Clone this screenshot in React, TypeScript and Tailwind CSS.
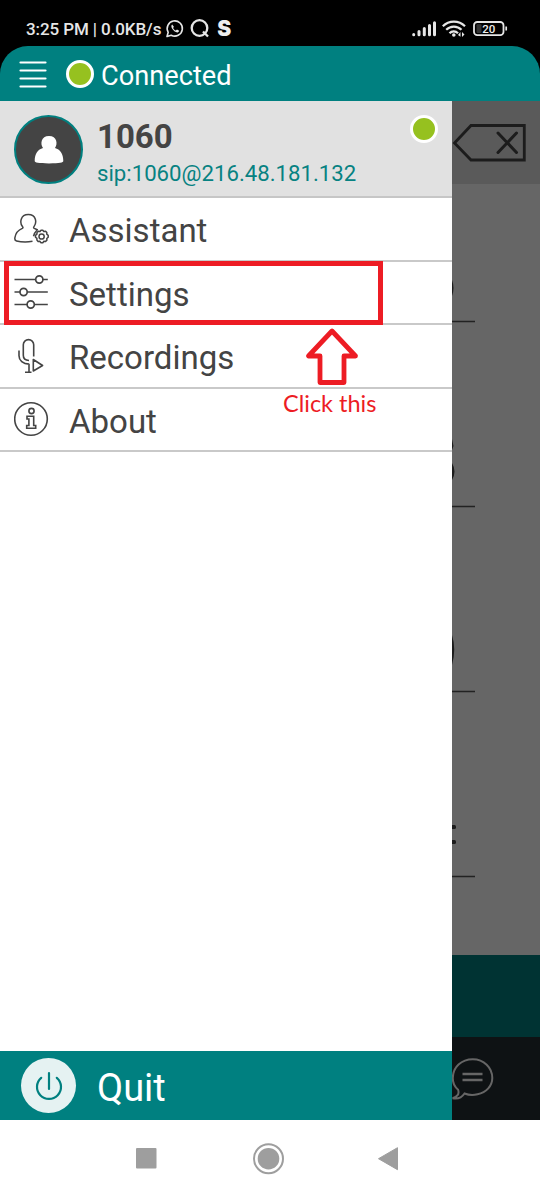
import type { ReactNode } from "react";

const ICON_STROKE = "#444";

function StatusBar() {
  return (
    <div className="flex h-[46px] items-start bg-black pt-[17px] text-[#e6e6e6]">
      <span className="ml-[26px] w-[138px] whitespace-nowrap text-[17px] leading-6 font-medium tracking-[-0.1px]">
        3:25 PM | 0.0KB/s
      </span>
      <svg className="ml-px" width="70" height="24" viewBox="165 17 70 24" fill="none" stroke="#e6e6e6">
        <path
          d="M167 36.500l1.200-4.200a7.600 7.600 0 1 1 3 2.900z"
          strokeWidth="1.600"
          strokeLinejoin="round"
        />
        <path
          d="M172.200 24.600c-1.300 1-1 2.700.2 4.500 1.500 2.200 3.600 3.600 5.200 3.300.9-.2 1.500-.9 1.500-1.600l-2.100-1.300-1.200 1c-1.200-.5-2.200-1.500-2.700-2.600l.8-1.100z"
          fill="#e6e6e6"
          stroke="none"
        />
        <circle cx="199.500" cy="28" r="7.800" strokeWidth="2.300" />
        <path d="M203 31.500l5 5" strokeWidth="2.300" />
        <text x="217.200" y="35.900" fontSize="21" fontWeight="900" fontFamily="Inter, sans-serif" fill="#eee" stroke="none">
          S
        </text>
      </svg>
      <svg className="ml-auto" width="130" height="24" viewBox="410 17 130 24" fill="none">
        <g stroke="#e6e6e6" strokeWidth="3" strokeLinecap="round">
          <path d="M413.700 34.500v.3M419 31.500v3.300M424.300 28.500v6.300M429.500 25.500v9.300M434.500 22.800v12" />
        </g>
        <g stroke="#e6e6e6" strokeWidth="2.200">
          <path d="M442.800 26.200c6.200-6.200 16-6.200 22.200 0M446.200 29.800c4.300-4.300 11-4.300 15.300 0M449.500 33.200c2.300-2.500 6.100-2.500 8.500 0" />
        </g>
        <circle cx="453.800" cy="35" r="1.800" fill="#e6e6e6" />
        <path d="M458 35l2.500-3v4.700zM464.500 34.500l-2.500 2.500v-5z" fill="#e6e6e6" />
        <rect x="474" y="22" width="29.500" height="13.200" rx="3.300" stroke="#e6e6e6" strokeWidth="1.800" />
        <rect x="476.500" y="24.300" width="5" height="8.700" rx="1" fill="#333" />
        <path d="M506.200 26.500v4" stroke="#e6e6e6" strokeWidth="1.700" />
        <text x="482.200" y="32.900" fontSize="11.500" fontWeight="500" fontFamily="Roboto, sans-serif" fill="#eee">
          20
        </text>
      </svg>
    </div>
  );
}

function StatusDot() {
  return <span className="size-[28px] shrink-0 rounded-full border-3 border-white bg-[#96c11f]" />;
}

function TopBar() {
  return (
    <div className="bg-black">
      <header className="flex h-[55px] items-center rounded-t-[28px] bg-[#008080] pl-[19px] text-white">
        <svg width="28" height="28" viewBox="0 0 28 28" stroke="white" strokeWidth="2.200" strokeLinecap="round">
          <path d="M1.500 2.500h25M1.500 10.500h25M1.500 18.500h25M1.500 26.500h25" />
        </svg>
        <span className="ml-[19px] flex">
          <StatusDot />
        </span>
        <h1 className="ml-[7px] pt-[5px] text-[27.200px] leading-8">Connected</h1>
      </header>
    </div>
  );
}

function AssistantIcon() {
  return (
    <svg width="36" height="36" viewBox="0 -1.500 36 36" fill="none" stroke={ICON_STROKE} strokeWidth="1.500">
      <path
        d="M18.500 28.800c-5 .8-11.500.7-16-.4-1.800-.4-1.900-1.700-1.600-3.300.9-5.300 3.500-7.600 7.400-9.200.8-.4.900-1 .3-1.700C5.500 10.500 6.200 2 14.300 2c8 0 8.700 8.200 5.700 12.100-.6.800-.5 1.400.3 1.800l3 1.400c-1.700 1.700-3.200 4-3.800 6.500"
        strokeLinejoin="round"
      />
      <path
        d="M26 19l1-1.300h1.800l1 1.300 1.800-.3 1.200 1.300v1.700l1.400 1.100v1.900L32.800 26l.1 1.700-1.300 1.200-1.700-.1-1.100 1.400H27l-1.200-1.400-1.700.1-1.200-1.300v-1.700l-1.400-1.200v-1.900l1.400-1.100.1-1.700 1.200-1.200z"
        strokeLinejoin="round"
      />
      <circle cx="27.600" cy="24" r="2.600" />
    </svg>
  );
}

function SettingsIcon() {
  return (
    <svg width="36" height="36" viewBox="0 0 36 36" fill="white" stroke={ICON_STROKE} strokeWidth="1.700">
      <path d="M.5 5.500h33.300M.5 18h33.300M.5 30.500h33.300" />
      <circle cx="25.300" cy="5.500" r="3.600" />
      <circle cx="9.600" cy="18" r="3.600" />
      <circle cx="16.700" cy="30.500" r="3.600" />
    </svg>
  );
}

function RecordingsIcon() {
  return (
    <svg width="36" height="36" viewBox="0 0 36 36" fill="none" stroke={ICON_STROKE} strokeWidth="1.600">
      <path d="M19.700 18.500V6.800a5.200 5.200 0 0 0-10.400 0v10.500c0 3.200 2.200 5.100 5.700 5.200" />
      <path d="M5 12.500v5.300c0 4.600 3.800 8.300 10.300 8.300M15 26v8M11 34.200h6.500M19.300 21.500v11.500l9.300-5.500z" strokeLinejoin="round" />
    </svg>
  );
}

function AboutIcon() {
  return (
    <svg width="36" height="36" viewBox="0 0 36 36" fill="none" stroke={ICON_STROKE} strokeWidth="1.600">
      <circle cx="17" cy="18" r="16.300" />
      <circle cx="17.500" cy="10" r="2.600" />
      <path d="M13 15.200h6.700v9.300h2v2.800h-9v-2.800h2.200v-6.500H13z" />
    </svg>
  );
}

const menuItems: { label: string; icon: ReactNode }[] = [
  { label: "Assistant", icon: <AssistantIcon /> },
  { label: "Settings", icon: <SettingsIcon /> },
  { label: "Recordings", icon: <RecordingsIcon /> },
  { label: "About", icon: <AboutIcon /> },
];

function Account() {
  return (
    <div className="flex h-[97px] border-b-2 border-[#c6c6c6] bg-[#e1e1e1] pl-[14px]">
      <div className="mt-[14px] flex size-[69px] items-center justify-center rounded-full border-2 border-[#008080] bg-[#444]">
        <svg width="30" height="30" viewBox="0 0 30 30" fill="white">
          <path d="M15 1c8 0 9 8 6 12 5 1.500 8.300 5.500 8.300 13 0 1.500-3.500 2.400-14.300 2.400S.7 27.500.7 26C.7 18.500 4 14.500 9 13 6 9 7 1 15 1z" />
        </svg>
      </div>
      <div className="ml-[14px] flex flex-col pt-[17px]">
        <span className="text-[33px] leading-[38px] font-bold text-[#444]">1060</span>
        <span className="text-[22.200px] leading-[35px] text-[#078282]">sip:1060@216.48.181.132</span>
      </div>
      <span className="mt-[14px] mr-[14px] ml-auto flex">
        <StatusDot />
      </span>
    </div>
  );
}

function Drawer() {
  return (
    <aside className="flex w-[452px] flex-col bg-white">
      <Account />
      <nav>
        {menuItems.map(({ label, icon }) => (
          <div key={label} className="flex h-[63.500px] items-center border-b-2 border-[#c9c9c9] pl-[14px] text-[#444]">
            {icon}
            <span className="ml-[19px] pt-[5px] text-[33px] leading-10">{label}</span>
          </div>
        ))}
      </nav>
      <div className="mt-auto flex h-[69px] items-center bg-[#008080] pl-[21px] text-white">
        <span className="flex size-[55px] items-center justify-center rounded-full bg-[#e5f2f2]">
          <svg width="30" height="30" viewBox="0 0 30 30" fill="none" stroke="#008080" strokeWidth="2.200" strokeLinecap="round">
            <path d="M15 2v16M7.200 6.800a12 12 0 1 0 15.600 0" />
          </svg>
        </span>
        <span className="ml-[21px] pt-[5px] text-[38px] leading-10">Quit</span>
      </div>
    </aside>
  );
}

// The dialer screen, dimmed behind the open drawer
function DimmedDialer() {
  return (
    <div className="flex w-[88px] flex-col bg-[#666]">
      <div className="flex h-[83px] items-center bg-[#5a5a5a]">
        <svg width="76" height="42" viewBox="0 0 76 42" fill="none" stroke="#1c1c1c" strokeWidth="2.800">
          <path d="M19 3.500h53.300V38H19L2.500 21z" />
          <path d="M46 11l18.500 19.500M64.500 11L46 30.500" strokeWidth="3" strokeLinecap="round" />
        </svg>
      </div>
      <svg width="88" height="771" viewBox="452 184 88 771" fill="#1c1c1c">
        <path d="M452 280q3 8 0 16zM452 439l1.500 7-1.500 4zM452 463q5 8.500 0 17zM452 635q4.500 14 0 30z" />
        <rect x="450" y="825" width="6" height="4" rx="1.500" />
        <rect x="450" y="840" width="6" height="4" rx="1.500" />
        <path d="M452 321.500h23M452 506.500h23M452 691.500h23M452 876.500h23" stroke="#222" strokeWidth="1.600" />
      </svg>
      <div className="h-[82px] bg-[#003333]" />
      <div className="h-[83px] bg-[#0e1214]">
        <svg width="88" height="83" viewBox="452 1037 88 83" fill="none" stroke="#666" strokeWidth="2">
          <path d="M464.500 1093.500c4 1.500 9 1.800 13 .7 9-1.700 14.800-8.500 14.800-16.200 0-10.500-8.500-18.800-19.500-18.800-11.300 0-20 8-20 19 0 4.800 1.500 8.300 5.300 11.500 1.500 4.500-1 7.200-5.500 8.500 4.500 1 9.200-.7 11.900-4.700z" />
          <path d="M462.500 1074h20M462.500 1080h20" strokeWidth="2.400" />
        </svg>
      </div>
    </div>
  );
}

function NavigationBar() {
  return (
    <footer className="flex h-[80px] bg-white pl-[133px]">
      <svg width="270" height="80" viewBox="133 1120 270 80" fill="#9e9e9e">
        <rect x="136" y="1148" width="20.500" height="20.500" rx="1" />
        <circle cx="268.500" cy="1158.700" r="14.500" fill="none" stroke="#9e9e9e" strokeWidth="2" />
        <circle cx="268.500" cy="1158.700" r="10.800" />
        <path d="M378.500 1158.700l19-11v22z" stroke="#9e9e9e" strokeLinejoin="round" />
      </svg>
    </footer>
  );
}

function Annotation() {
  return (
    <>
      <div className="absolute top-[261px] left-[4px] h-[64px] w-[379px] border-[5px] border-[#ed1c24]" />
      <svg
        className="absolute top-[326px] left-[304px]"
        width="56"
        height="60"
        viewBox="304 326 56 60"
        fill="white"
        stroke="#ed1c24"
        strokeWidth="4.800"
        strokeLinejoin="round"
      >
        <path d="M332 331L308.500 356H320v26.500h24V356h11.500z" />
      </svg>
      <span className="absolute top-[389px] left-[283px] font-[Lato,sans-serif] text-[23.500px] leading-7 whitespace-nowrap text-[#ed1c24]">
        Click this
      </span>
    </>
  );
}

export default function App() {
  return (
    <div className="relative flex h-[1200px] w-[540px] flex-col overflow-hidden bg-white font-[Roboto,sans-serif]">
      <StatusBar />
      <TopBar />
      <main className="flex h-[1019px]">
        <Drawer />
        <DimmedDialer />
      </main>
      <NavigationBar />
      <Annotation />
    </div>
  );
}
